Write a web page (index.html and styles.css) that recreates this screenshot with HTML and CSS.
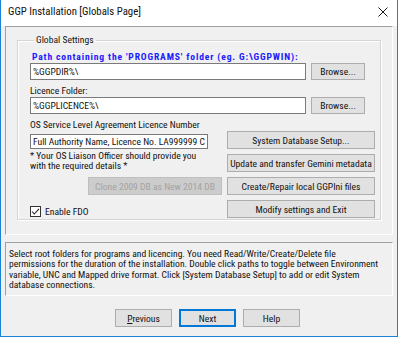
FILE: index.html
```html
<!DOCTYPE html>
<html lang="en">
  <head>
    <meta charset="UTF-8" />
    <title>GGP Installation [Globals Page]</title>
    <link rel="stylesheet" href="styles.css">
  </head>
  <body>
    <div class="window">
      <div class="titlebar">
        <span class="title">GGP Installation [Globals Page]</span>
        <svg class="close" width="10" height="10" viewBox="0 0 10 10">
          <path d="M0.5 0.5L9.5 9.5M9.5 0.5L0.5 9.5" stroke="#1a1a1a" stroke-width="1" fill="none" />
        </svg>
      </div>
      <div class="main">
        <div class="panel">
          <fieldset class="group">
            <legend>Global Settings</legend>
            <div class="label bold">Path containing the 'PROGRAMS' folder (eg. G:\GGPWIN):</div>
            <div class="row">
              <div class="input">%GGPDIR%\</div>
              <button class="btn browse">Browse...</button>
            </div>
            <div class="label">Licence Folder:</div>
            <div class="row">
              <div class="input">%GGPLICENCE%\</div>
              <button class="btn browse">Browse...</button>
            </div>
            <div class="label os">OS Service Level Agreement Licence Number</div>
            <div class="cols">
              <div class="left">
                <div class="input small">Full Authority Name, Licence No. LA999999 C</div>
                <div class="note">* Your OS Liaison Officer should provide you<br>with the required details *</div>
                <button class="btn clone" disabled>Clone 2009 DB as New 2014 DB</button>
                <label class="check">
                  <svg class="box" width="11" height="11" viewBox="0 0 11 11">
                    <rect x="0.5" y="0.5" width="10" height="10" fill="#fff" stroke="#333" />
                    <path d="M2 5.5L4.3 8L9 2.8" stroke="#222" stroke-width="1.1" fill="none" />
                  </svg>
                  Enable FDO
                </label>
              </div>
              <div class="right">
                <button class="btn wide">System Database Setup...</button>
                <button class="btn wide">Update and transfer Gemini metadata</button>
                <button class="btn wide">Create/Repair local GGPIni files</button>
                <button class="btn wide">Modify settings and Exit</button>
              </div>
            </div>
          </fieldset>
        </div>
        <div class="desc">Select root folders for programs and licencing. You need Read/Write/Create/Delete file<br>permissions for the duration of the installation. Double click paths to toggle between Environment<br>variable, UNC and Mapped drive format. Click [System Database Setup] to add or edit System<br>database connections.</div>
        <div class="nav">
          <button class="btn navbtn"><u>P</u>revious</button>
          <button class="btn navbtn default">Next</button>
          <button class="btn navbtn">Help</button>
        </div>
      </div>
    </div>
  </body>
</html>
```

FILE: styles.css
```css
* {
  margin: 0;
  padding: 0;
  box-sizing: border-box;
}
body {
  width: 398px;
  height: 337px;
  font-family: "Roboto Condensed", "Liberation Sans", sans-serif;
  font-size: 9.6px;
  color: #111;
  overflow: hidden;
}
.window {
  width: 398px;
  height: 337px;
  border: 1px solid #1883d7;
  border-top: none;
  background: #f0f0f0;
}
.titlebar {
  height: 26px;
  background: #fff;
  display: flex;
  align-items: center;
  justify-content: space-between;
  padding: 0 9px 3px 7px;
}
.title {
  font-size: 10.8px;
}
.main {
  padding: 0 4px;
}
.panel {
  height: 209px;
  border: 1px solid #a0a0a0;
  border-right-color: #fff;
  border-bottom-color: #fff;
  padding: 7px 11px 0 11px;
}
.group {
  height: 186px;
  border: 1px solid #d5d5d5;
  box-shadow: 1px 1px 0 #fff, inset 1px 1px 0 #fff;
  padding: 0 4px 0 12px;
}
.group legend {
  margin-left: 4px;
  padding: 0 2px;
  line-height: 12px;
}
.label {
  line-height: 12px;
  white-space: nowrap;
}
.bold {
  font-weight: bold;
  color: #1a1aff;
  letter-spacing: 0.85px;
  margin-left: 2px;
  margin-top: 5px;
}
.row {
  display: flex;
  align-items: center;
  gap: 5px;
  margin-bottom: 5px;
}
.row + .os {
  margin-top: 1px;
}
.input {
  width: 276px;
  height: 17px;
  border: 1px solid #7a7a7a;
  background: #fff;
  line-height: 15px;
  padding-left: 2px;
  white-space: nowrap;
  overflow: hidden;
}
.input.small {
  width: 178px;
  height: 15px;
  line-height: 13px;
  margin-top: 3px;
}
.btn {
  font: inherit;
  background: #e1e1e1;
  border: 1px solid #adadad;
  color: #111;
  white-space: nowrap;
  overflow: hidden;
}
.browse {
  width: 54px;
  height: 17px;
}
.cols {
  display: flex;
  gap: 5px;
}
.left {
  width: 192px;
  display: flex;
  flex-direction: column;
}
.note {
  line-height: 10px;
  margin-top: 2px;
}
.clone {
  width: 134px;
  height: 18px;
  align-self: flex-end;
  margin-top: 6px;
  color: #a3a3a3;
  background: #cccccc;
  border-color: #bfbfbf;
}
.check {
  display: flex;
  align-items: center;
  gap: 4px;
  margin-top: 11px;
  line-height: 11px;
}
.right {
  display: flex;
  flex-direction: column;
  gap: 5px;
}
.wide {
  width: 148px;
  height: 18px;
}
.desc {
  margin-top: 7px;
  height: 54px;
  border: 1px solid #a0a0a0;
  border-right-color: #fff;
  border-bottom-color: #fff;
  padding: 6px 3px 0 3px;
  line-height: 10.4px;
  white-space: nowrap;
}
.nav {
  display: flex;
  gap: 7px;
  margin-top: 13px;
  padding-left: 110px;
}
.navbtn {
  width: 57px;
  height: 18px;
}
.default {
  border-color: #0078d7;
  box-shadow: inset 0 0 0 1px #0078d7;
}
```
